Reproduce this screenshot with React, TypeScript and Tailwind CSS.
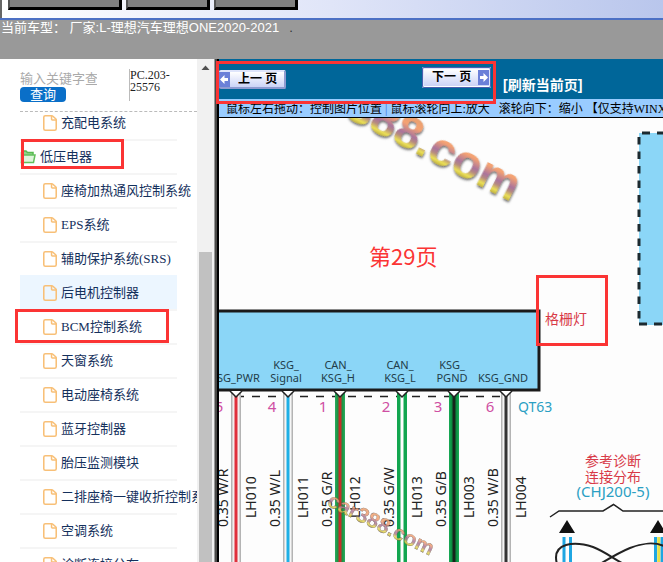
import { File, FolderOpen } from 'lucide-react';
import { clsx } from 'clsx';

interface TreeItem {
  label: string;
  folder?: boolean;
  active?: boolean;
}

const treeItems: TreeItem[] = [
  { label: '充配电系统' },
  { label: '低压电器', folder: true },
  { label: '座椅加热通风控制系统' },
  { label: 'EPS系统' },
  { label: '辅助保护系统(SRS)' },
  { label: '后电机控制器', active: true },
  { label: 'BCM控制系统' },
  { label: '天窗系统' },
  { label: '电动座椅系统' },
  { label: '蓝牙控制器' },
  { label: '胎压监测模块' },
  { label: '二排座椅一键收折控制系统' },
  { label: '空调系统' },
  { label: '诊断连接分布' },
];

interface Wire {
  x: number;
  pin: string;
  pinX: number;
  labels: string[];
  labelX: number;
  spec: string;
  code: string;
  edge: string;
  fill: string;
  core: string;
}

const wires: Wire[] = [
  { x: 236, pin: '5', pinX: 219, labels: ['KSG_PWR'], labelX: 235, spec: '0.35 W/R', code: 'LH010', edge: '#b4b4b4', fill: '#f4eeee', core: '#e0303c' },
  { x: 288, pin: '4', pinX: 272, labels: ['KSG_', 'Signal'], labelX: 286, spec: '0.35 W/L', code: 'LH011', edge: '#b4b4b4', fill: '#f6f6f6', core: '#1fb0e6' },
  { x: 340, pin: '1', pinX: 323, labels: ['CAN_', 'KSG_H'], labelX: 338, spec: '0.35 G/R', code: 'LH012', edge: '#27a85a', fill: '#1d9444', core: '#c4302b' },
  { x: 402, pin: '2', pinX: 386, labels: ['CAN_', 'KSG_L'], labelX: 400, spec: '0.35 G/W', code: 'LH013', edge: '#12a650', fill: '#12a650', core: '#ffffff' },
  { x: 454, pin: '3', pinX: 438, labels: ['KSG_', 'PGND'], labelX: 452, spec: '0.35 G/B', code: 'LH003', edge: '#16a653', fill: '#0d8f42', core: '#16251c' },
  { x: 506, pin: '6', pinX: 490, labels: ['KSG_GND'], labelX: 503, spec: '0.35 W/B', code: 'LH004', edge: '#b4b4b4', fill: '#f4f4f4', core: '#333333' },
];

function TopToolbar() {
  return (
    <header className="flex h-5 shrink-0 items-start gap-1 border-b-2 border-[#4c70c4] bg-gradient-to-r from-white via-[#e0e5f8] to-[#b9c6ec]">
      <div className="mr-0.5 h-full w-0.5 bg-[#666]" />
      <button type="button" aria-label="菜单一" className="h-2.5 w-[114px] border-r-[3px] border-b-[3px] border-l-2 border-black border-l-[#555] bg-[#808080]" />
      <button type="button" aria-label="菜单二" className="h-2.5 w-21 border-r-[3px] border-b-[3px] border-l-2 border-black border-l-[#555] bg-[#808080]" />
      <button type="button" aria-label="菜单三" className="h-2.5 w-21 border-r-[3px] border-b-[3px] border-l-2 border-black border-l-[#555] bg-[#808080]" />
    </header>
  );
}

function Sidebar() {
  return (
    <aside className="flex w-[197px] shrink-0 flex-col overflow-hidden bg-white pt-2 pl-5">
      <div className="flex h-11 shrink-0 items-start">
        <form className="w-[109px] pt-1">
          <input
            type="text"
            aria-label="关键字"
            placeholder="输入关键字查询"
            className="block h-4 w-[77px] text-[13px] leading-4 outline-none placeholder:text-[#aaa]"
          />
          <button type="button" className="block h-[15px] w-[46px] rounded bg-[#0a6fc8] text-[13px] leading-[15px] text-white">
            查询
          </button>
        </form>
        <div className="mt-0.5 h-8 w-14 border-l border-[#bbb] font-['Liberation_Serif','Noto_Sans_CJK_SC',serif] text-[12px] leading-3 text-[#222]">
          PC.203-
          <br />
          25576
        </div>
      </div>
      <nav className="min-h-0 flex-1 overflow-hidden border-t border-dashed border-[#bbb]">
        <ul className="-mt-[7px] w-[157px]">
          {treeItems.map((item) => (
            <li
              key={item.label}
              className={clsx(
                'h-[34px] border-t-2',
                item.active ? 'border-[#ecf6ff] bg-[#ecf6ff]' : 'border-[#f5f5f5]',
              )}
            >
              <a
                href="#"
                className={clsx(
                  "flex h-full items-center gap-1 whitespace-nowrap font-['Liberation_Serif','Noto_Sans_CJK_SC',serif] text-[13px] leading-4 text-[#14305c]",
                  !item.folder && 'pl-[23px]',
                )}
              >
                {item.folder ? (
                  <svg viewBox="0 0 16 16" className="size-4 shrink-0">
                    <path d="M1.500 13.500V3.500l1-1.500h3.500l1.500 1.500h5.500V6" fill="#8fd48a" stroke="#57bb50" strokeWidth="1.500" />
                    <path d="M1.500 13.500L3.500 6h11.500l-1.500 7.500z" fill="#dff5dc" stroke="#63c05c" strokeWidth="1.500" />
                  </svg>
                ) : (
                  <File className="h-4 w-3.5 shrink-0 text-[#f8c078]" strokeWidth={2} preserveAspectRatio="none" viewBox="3 1 18 22" />
                )}
                {item.label}
              </a>
            </li>
          ))}
        </ul>
      </nav>
    </aside>
  );
}

function Scrollbar() {
  return (
    <div className="flex w-[17px] shrink-0 flex-col bg-[#f1f1f1]">
      <svg viewBox="0 0 17 17" className="size-[17px]">
        <path d="M4.500 11h8l-4-4.500z" fill="#505050" />
      </svg>
      <div className="mr-0.5 ml-0.5 mt-44 flex-1 bg-[#c1c1c1]" />
    </div>
  );
}

function ArrowIcon({ left }: { left?: boolean }) {
  return (
    <svg viewBox="0 0 11 15" className="h-[15px] w-[11px] shrink-0">
      <rect width="11" height="15" fill="#6b80d8" />
      <path d={left ? 'M1 7.500l4.500-4.500v3H9v3H5.500v3z' : 'M10 7.500L5.500 3v3H2v3h3.500v3z'} fill="#fff" />
    </svg>
  );
}

function PageNav() {
  return (
    <div className="flex h-10 shrink-0 items-center bg-[#006699] text-[13px] text-black">
      <button type="button" className="flex h-[19px] w-[67px] items-center gap-2 rounded-xs border-2 border-[#8f9bd0] border-t-[#dfe5fb] border-l-0 bg-gradient-to-b from-white to-[#cbd3f6] font-bold">
        <ArrowIcon left />
        <span className="whitespace-pre text-[12px] leading-3">上一 页</span>
      </button>
      <button type="button" className="mb-1 ml-34 flex h-[21px] w-[69px] items-center justify-between rounded-xs border-2 border-[#dfe5fb] border-b-white bg-gradient-to-b from-white to-[#cbd3f6] pl-2 font-bold outline outline-[#4a5fae] -outline-offset-1">
        <span className="whitespace-pre text-[12px] leading-3">下一 页</span>
        <ArrowIcon />
      </button>
      <a href="#" className="mt-3 ml-3 whitespace-nowrap text-[14px] font-bold text-white">
        [刷新当前页]
      </a>
    </div>
  );
}

function Hint() {
  return (
    <p className="h-[19px] shrink-0 overflow-hidden border-b border-black bg-[#99ccff] pl-[7px] font-['Liberation_Serif','Noto_Sans_CJK_SC',serif] text-[12px] leading-5 whitespace-pre text-black">
      鼠标左右拖动：控制图片位置<span className="px-[3px] text-[#3b6fd8]">|</span>鼠标滚轮向上:放大   滚轮向下：缩小 【仅支持WINXP】
    </p>
  );
}

function Diagram() {
  return (
    <svg
      viewBox="219 118 444 444"
      width="444"
      height="444"
      className="block shrink-0 font-['Noto_Sans','Noto_Sans_CJK_SC',sans-serif]"
    >
      <defs>
        <linearGradient id="mark" x1="0" y1="0" x2="0" y2="1">
          <stop offset="0.2" stopColor="#e8a070" />
          <stop offset="0.38" stopColor="#f5a272" />
          <stop offset="0.56" stopColor="#a9749c" />
          <stop offset="0.64" stopColor="#b58a80" />
          <stop offset="0.74" stopColor="#ebe056" />
          <stop offset="0.83" stopColor="#b5a440" />
        </linearGradient>
        <filter id="shade" x="-10%" y="-20%" width="120%" height="150%">
          <feDropShadow dx="1" dy="1.500" stdDeviation="1.200" floodColor="#444" floodOpacity="0.8" />
        </filter>
      </defs>

      {/* large watermark */}
      <g transform="translate(511 202) rotate(27)">
        <text textAnchor="end" fontSize="47" fill="url(#mark)" filter="url(#shade)" className="font-['Liberation_Sans',sans-serif] font-bold">
          car388.com
        </text>
      </g>

      {/* module on the right edge */}
      <rect x="639" y="133" width="40" height="192" fill="#8bd6f7" />
      <path d="M639 133V325" stroke="#1c2a30" strokeWidth="3" strokeDasharray="7.500 7" strokeDashoffset="-4" />
      <path d="M642 133H663M639 324H663" stroke="#1c2a30" strokeWidth="3" strokeDasharray="8 7" />

      {/* control module */}
      <rect x="210" y="311" width="329" height="79" fill="#8bd6f7" stroke="#1a1a1a" strokeWidth="3" />
      <path d="M238 396.500H502" stroke="#222" strokeWidth="1.500" strokeDasharray="8 8" strokeDashoffset="-14" />

      {wires.map((w) => (
        <g key={w.code}>
          <rect x={w.x - 5} y="392" width="10" height="170" fill={w.edge} />
          <rect x={w.x - 3.5} y="392" width="7" height="170" fill={w.fill} />
          <rect x={w.x - 1.5} y="392" width="3" height="170" fill={w.core} />
          <path d={`M${w.x - 6} 391L${w.x} 397L${w.x + 6} 391`} fill="#fff" stroke="#222" strokeWidth="1.500" />
          {w.labels.map((label, i) => (
            <text key={label} x={w.labelX} y={w.labels.length === 1 ? 382 : 369 + i * 13} textAnchor="middle" fontSize="11" fill="#223d4a">
              {label}
            </text>
          ))}
          <text x={w.pinX} y="412" textAnchor="middle" fontSize="15" fill="#cf4fa3">
            {w.pin}
          </text>
          <text transform={`translate(${w.x - 8} 527) rotate(-90)`} fontSize="14" fill="#222">
            {w.spec}
          </text>
          <text transform={`translate(${w.x + 20} 518) rotate(-90)`} fontSize="14" fill="#222">
            {w.code}
          </text>
        </g>
      ))}
      <text x="518" y="412" fontSize="14" fill="#2b9fc3">
        QT63
      </text>
      <text x="545" y="324" fontSize="14" fill="#d83a48">
        格栅灯
      </text>

      {/* small watermark */}
      <g transform="translate(430 556) rotate(26)">
        <text textAnchor="end" fontSize="21" fill="url(#mark)" stroke="#5a4a44" strokeWidth="0.300" opacity="0.85" className="font-['Liberation_Sans',sans-serif] font-bold">
          car388.com
        </text>
      </g>

      {/* diagnostic connector */}
      <g textAnchor="middle">
        <text x="613" y="466" fontSize="14" fill="#d83a48">
          参考诊断
        </text>
        <text x="613" y="482" fontSize="14" fill="#d83a48">
          连接分布
        </text>
        <text x="613" y="497" fontSize="15" fill="#2b9fc3">
          (CHJ200-5)
        </text>
      </g>
      <path d="M550 517L559 511H603L613.500 504.500L623 511H663" fill="none" stroke="#222" strokeWidth="1.500" />
      <path d="M567 520L559 533H575ZM658 520L650 533H666Z" fill="#111" />
      <path d="M564 537V562M570.500 537V562M655.500 537V562M662 537V562" stroke="#1fa6e2" strokeWidth="3" />
      <path d="M658.700 537V562" stroke="#e6e04a" strokeWidth="3" />
      <path d="M557 564C551 542 575 541 593 547C606 552 615 560 624 564M600 564C610 558 620 552 630 548C642 543 655 542 664 546" fill="none" stroke="#222" strokeWidth="2" />
    </svg>
  );
}

export default function App() {
  return (
    <div className="relative flex h-screen flex-col overflow-hidden bg-white font-['Liberation_Sans','Noto_Sans_CJK_SC',sans-serif]">
      <TopToolbar />
      <div className="h-[39px] shrink-0 bg-[#999] pl-px text-[13px] leading-[15px] whitespace-pre text-white">
        当前车型： 厂家:L-理想汽车理想ONE2020-2021<span className="ml-2.5 text-[#333]">.</span>
      </div>
      <div className="flex min-h-0 flex-1">
        <Sidebar />
        <Scrollbar />
        <div className="w-[3px] shrink-0 border-l border-[#999] bg-[#4a4a48]" />
        <main className="flex min-w-0 flex-1 flex-col overflow-hidden border-l-2 border-black bg-[#fdfdfd]">
          <PageNav />
          <Hint />
          <Diagram />
        </main>
      </div>

      {/* red mark-up over the page */}
      <div className="pointer-events-none absolute top-[61px] left-[216px] h-[43px] w-[280px] border-3 border-[#fb3434]" />
      <div className="pointer-events-none absolute top-[139px] left-[21px] h-[30px] w-[103px] border-3 border-[#fb3434]" />
      <div className="pointer-events-none absolute top-[309px] left-[15px] h-[34px] w-[154px] border-3 border-[#fb3434]" />
      <div className="pointer-events-none absolute top-[275px] left-[536px] h-[71px] w-[72px] border-3 border-[#fb3434]" />
      <p className="pointer-events-none absolute top-[243px] left-[369px] font-['Noto_Sans_CJK_SC',sans-serif] text-[22px] leading-6 text-[#fb3434]">
        第29页
      </p>
    </div>
  );
}
